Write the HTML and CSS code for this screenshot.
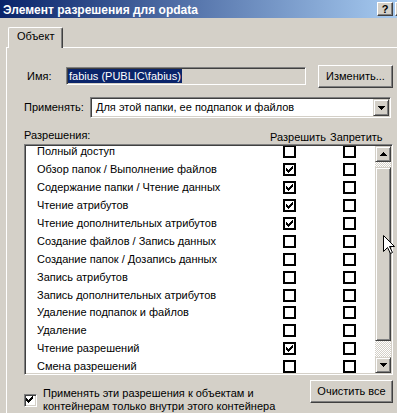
FILE: index.html
```html
<!DOCTYPE html>
<html>
<head>
<meta charset="utf-8">
<link rel="stylesheet" href="styles.css">
</head>
<body>
<div class="titlebar">
  <span class="title">Элемент разрешения для opdata</span>
  <span class="cap-btn help">?</span>
  <span class="cap-btn close"></span>
</div>
<div class="tabs"><div class="tab">Объект</div></div>
<div class="panel">
  <div class="content">
    <div class="name-row">
      <span class="name-lbl">Имя:</span>
      <div class="field"><span class="sel">fabius (PUBLIC\fabius)</span></div>
      <div class="btn change-btn">Изменить...</div>
    </div>
    <div class="apply-row">
      <span class="apply-lbl">Применять:</span>
      <div class="combo">
        <span class="combo-text">Для этой папки, ее подпапок и файлов</span>
        <span class="dd-btn"><svg width="7" height="4" viewBox="0 0 7 4"><path d="M0 0h7v1h-1v1h-1v1h-1v1h-1v-1h-1v-1h-1v-1h-1z" fill="#000"/></svg></span>
      </div>
    </div>
    <div class="perm-head">
      <span class="perm-lbl">Разрешения:</span>
      <span class="col-allow">Разрешить</span>
      <span class="col-deny">Запретить</span>
    </div>
    <div class="list">
      <div class="rows">
        <div class="rows-inner">
          <div class="prow"><span class="ptext">Полный доступ</span><span class="cb"></span><span class="cb"></span></div>
          <div class="prow"><span class="ptext">Обзор папок / Выполнение файлов</span><span class="cb"><svg width="7" height="7" viewBox="0 0 7 7"><path d="M0 2h1v3h-1zM1 3h1v3h-1zM2 4h1v3h-1zM3 3h1v3h-1zM4 2h1v3h-1zM5 1h1v3h-1zM6 0h1v3h-1z" fill="#000"/></svg></span><span class="cb"></span></div>
          <div class="prow"><span class="ptext">Содержание папки / Чтение данных</span><span class="cb"><svg width="7" height="7" viewBox="0 0 7 7"><path d="M0 2h1v3h-1zM1 3h1v3h-1zM2 4h1v3h-1zM3 3h1v3h-1zM4 2h1v3h-1zM5 1h1v3h-1zM6 0h1v3h-1z" fill="#000"/></svg></span><span class="cb"></span></div>
          <div class="prow"><span class="ptext">Чтение атрибутов</span><span class="cb"><svg width="7" height="7" viewBox="0 0 7 7"><path d="M0 2h1v3h-1zM1 3h1v3h-1zM2 4h1v3h-1zM3 3h1v3h-1zM4 2h1v3h-1zM5 1h1v3h-1zM6 0h1v3h-1z" fill="#000"/></svg></span><span class="cb"></span></div>
          <div class="prow"><span class="ptext">Чтение дополнительных атрибутов</span><span class="cb"><svg width="7" height="7" viewBox="0 0 7 7"><path d="M0 2h1v3h-1zM1 3h1v3h-1zM2 4h1v3h-1zM3 3h1v3h-1zM4 2h1v3h-1zM5 1h1v3h-1zM6 0h1v3h-1z" fill="#000"/></svg></span><span class="cb"></span></div>
          <div class="prow"><span class="ptext">Создание файлов / Запись данных</span><span class="cb"></span><span class="cb"></span></div>
          <div class="prow"><span class="ptext">Создание папок / Дозапись данных</span><span class="cb"></span><span class="cb"></span></div>
          <div class="prow"><span class="ptext">Запись атрибутов</span><span class="cb"></span><span class="cb"></span></div>
          <div class="prow"><span class="ptext">Запись дополнительных атрибутов</span><span class="cb"></span><span class="cb"></span></div>
          <div class="prow"><span class="ptext">Удаление подпапок и файлов</span><span class="cb"></span><span class="cb"></span></div>
          <div class="prow"><span class="ptext">Удаление</span><span class="cb"></span><span class="cb"></span></div>
          <div class="prow"><span class="ptext">Чтение разрешений</span><span class="cb"><svg width="7" height="7" viewBox="0 0 7 7"><path d="M0 2h1v3h-1zM1 3h1v3h-1zM2 4h1v3h-1zM3 3h1v3h-1zM4 2h1v3h-1zM5 1h1v3h-1zM6 0h1v3h-1z" fill="#000"/></svg></span><span class="cb"></span></div>
          <div class="prow"><span class="ptext">Смена разрешений</span><span class="cb"></span><span class="cb"></span></div>
        </div>
      </div>
      <div class="scrollbar">
        <div class="sb-btn"><svg width="7" height="4" viewBox="0 0 7 4"><path d="M3 0h1v1h1v1h1v1h1v1H0V3h1V2h1V1h1z" fill="#000"/></svg></div>
        <div class="sb-track"><div class="sb-thumb"></div></div>
        <div class="sb-btn"><svg width="7" height="4" viewBox="0 0 7 4"><path d="M0 0h7v1h-1v1h-1v1h-1v1h-1v-1h-1v-1h-1v-1h-1z" fill="#000"/></svg></div>
      </div>
    </div>
    <div class="bottom">
      <div class="apply-inner">
        <span class="cb3d"><svg width="7" height="7" viewBox="0 0 7 7"><path d="M0 2h1v3h-1zM1 3h1v3h-1zM2 4h1v3h-1zM3 3h1v3h-1zM4 2h1v3h-1zM5 1h1v3h-1zM6 0h1v3h-1z" fill="#000"/></svg></span>
        <span class="apply-text">Применять эти разрешения к объектам и<br>контейнерам только внутри этого контейнера</span>
      </div>
      <div class="btn clear-btn">Очистить все</div>
    </div>
  </div>
</div>
<svg class="cursor" width="13" height="20" viewBox="0 0 13 20"><path d="M0.5 0.5L0.5 16.5L4.5 12.5L7.5 18.5L9.5 17.5L6.5 11.5L11.5 11.5Z" fill="#fff" stroke="#000" stroke-width="1"/></svg>
</body>
</html>
```

FILE: styles.css
```css
html, body {
  margin: 0;
  padding: 0;
}
body {
  width: 397px;
  height: 413px;
  overflow: hidden;
  position: relative;
  background: #d4d0c8;
  font-family: "Liberation Sans", Arial, sans-serif;
  font-size: 11px;
  line-height: 13px;
  color: #000;
}

.titlebar {
  display: flex;
  align-items: center;
  width: 397px;
  height: 18px;
  box-sizing: border-box;
  padding-left: 3px;
  background: linear-gradient(to right, #0a246a, #a6caf0);
  overflow: hidden;
}
.title {
  margin-top: 2px;
  font-weight: bold;
  font-size: 12px;
  line-height: 14px;
  color: #fff;
  white-space: nowrap;
}
.cap-btn {
  flex-shrink: 0;
  width: 16px;
  height: 14px;
  box-sizing: border-box;
  border: 1px solid;
  border-color: #fff #404040 #404040 #fff;
  box-shadow: inset -1px -1px #808080;
  background: #d4d0c8;
}
.help {
  margin-left: auto;
  margin-right: 2px;
  font-weight: bold;
  font-size: 11px;
  line-height: 12px;
  text-align: center;
  color: #000;
}
.close {
  margin-right: -14px;
}

.tabs {
  height: 20px;
  margin-top: 9px;
  padding-left: 8px;
  position: relative;
  z-index: 1;
}
.tab {
  box-sizing: border-box;
  width: 55px;
  height: 21px;
  padding: 2px 0 0 8px;
  border: 1px solid #fff;
  border-bottom: 0;
  border-right-color: #404040;
  border-radius: 2px 2px 0 0;
  box-shadow: inset -1px 0 #808080;
  background: #d4d0c8;
}

.panel {
  margin-left: 6px;
  width: 373px;
  height: 348px;
  border-top: 1px solid #fff;
  border-left: 1px solid #fff;
  padding: 17px 0 0 17px;
}
.content {
  width: 369px;
}

.name-row {
  display: flex;
  height: 23px;
}
.name-lbl {
  margin: 5px 0 0 3px;
  width: 39px;
}
.field {
  margin-top: 2px;
  width: 240px;
  height: 18px;
  box-sizing: border-box;
  padding: 1px;
  border: 1px solid;
  border-color: #808080 #fff #fff #808080;
  box-shadow: inset 1px 1px #404040, inset -1px -1px #d4d0c8;
  overflow: hidden;
  white-space: nowrap;
}
.sel {
  display: inline-block;
  vertical-align: top;
  background: #0a246a;
  color: #fff;
  line-height: 14px;
  padding: 0 1px;
}

.btn {
  box-sizing: border-box;
  height: 23px;
  border: 1px solid;
  border-color: #fff #404040 #404040 #fff;
  box-shadow: inset -1px -1px #808080;
  display: flex;
  align-items: center;
  justify-content: center;
  white-space: nowrap;
}
.change-btn {
  width: 75px;
  margin-left: 12px;
}

.apply-row {
  display: flex;
  align-items: center;
  margin-top: 9px;
  height: 21px;
}
.apply-lbl {
  width: 66px;
}
.combo {
  display: flex;
  width: 301px;
  height: 21px;
  box-sizing: border-box;
  padding: 1px;
  border: 1px solid;
  border-color: #808080 #fff #fff #808080;
  box-shadow: inset 1px 1px #404040, inset -1px -1px #d4d0c8;
  background: #fff;
}
.combo-text {
  flex: 1;
  padding-left: 4px;
  line-height: 17px;
  white-space: nowrap;
}
.dd-btn, .sb-btn {
  display: flex;
  align-items: center;
  justify-content: center;
  box-sizing: border-box;
  border: 1px solid;
  border-color: #d4d0c8 #404040 #404040 #d4d0c8;
  box-shadow: inset 1px 1px #fff, inset -1px -1px #808080;
  background: #d4d0c8;
}
.dd-btn {
  width: 16px;
  height: 17px;
}

.perm-head {
  display: flex;
  margin-top: 11px;
  height: 15px;
}
.perm-lbl {
  width: 246px;
}
.col-allow {
  width: 60px;
  margin-top: 2px;
}
.col-deny {
  margin-top: 2px;
}

.list {
  display: flex;
  height: 231px;
  box-sizing: border-box;
  padding: 1px;
  border: 1px solid;
  border-color: #808080 #fff #fff #808080;
  box-shadow: inset 1px 1px #404040, inset -1px -1px #d4d0c8;
  background: #fff;
}
.rows {
  flex: 1;
  min-width: 0;
  overflow: hidden;
}
.rows-inner {
  margin-top: -3px;
}
.prow {
  display: grid;
  grid-template-columns: 246px 60px 13px;
  justify-items: start;
  align-items: center;
  height: 17.9px;
  padding-left: 11px;
  white-space: nowrap;
}
.cb {
  display: block;
  width: 13px;
  height: 13px;
  box-sizing: border-box;
  border: 2px solid #000;
  background: #fff;
}
.cb svg, .cb3d svg {
  display: block;
  margin: 1px;
}

.scrollbar {
  display: flex;
  flex-direction: column;
  width: 16px;
  flex-shrink: 0;
}
.sb-btn {
  height: 16px;
}
.sb-track {
  flex: 1;
  background: repeating-conic-gradient(#fff 0 25%, #d4d0c8 0 50%) 0 0 / 2px 2px;
}
.sb-thumb {
  margin-top: 5px;
  height: 174px;
  box-sizing: border-box;
  border: 1px solid;
  border-color: #d4d0c8 #404040 #404040 #d4d0c8;
  box-shadow: inset 1px 1px #fff, inset -1px -1px #808080;
  background: #d4d0c8;
}

.bottom {
  display: flex;
}
.apply-inner {
  display: flex;
  margin-top: 12px;
}
.cb3d {
  flex-shrink: 0;
  width: 13px;
  height: 13px;
  margin-top: 7px;
  box-sizing: border-box;
  padding: 1px;
  border: 1px solid;
  border-color: #808080 #fff #fff #808080;
  box-shadow: inset 1px 1px #404040, inset -1px -1px #d4d0c8;
  background: #fff;
}
.cb3d svg {
  margin: 0;
}
.apply-text {
  margin-left: 6px;
  white-space: nowrap;
}
.clear-btn {
  width: 83px;
  margin-left: auto;
  margin-top: 5px;
}

.cursor {
  position: absolute;
  left: 383px;
  top: 235px;
}
```
